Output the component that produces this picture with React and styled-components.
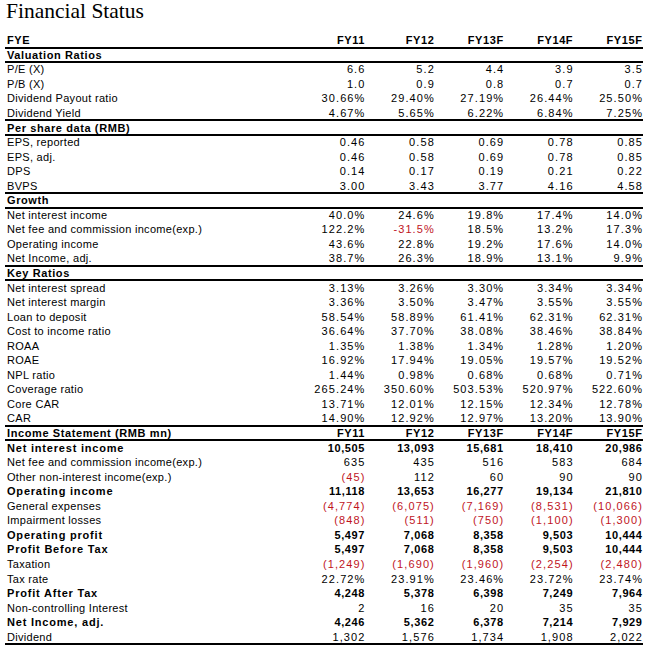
import React from 'react';
import styled, { createGlobalStyle } from 'styled-components';

const GlobalStyle = createGlobalStyle`
  body {
    margin: 0;
    background: #FFFFFF;
  }
`;

const Page = styled.div`
  width: 645px;
  height: 647px;
  padding: 0 2px 0 5px;
  box-sizing: border-box;
  background: #FFFFFF;
  color: #000000;
`;

const Title = styled.h1`
  margin: 0 0 0 1px;
  font-family: 'Liberation Serif', 'Times New Roman', serif;
  font-size: 21.5px;
  font-weight: normal;
  line-height: 22px;
  height: 33px;
`;

const Sheet = styled.div`
  display: flex;
  flex-direction: column;
  font-family: 'Liberation Sans', Arial, sans-serif;
  font-size: 11px;
`;

// fixed pitch rows; the rule straddles the row boundary like a spreadsheet cell border
const Row = styled.div`
  display: grid;
  grid-template-columns: 291px repeat(5, 69.4px);
  align-items: center;
  height: 14.56px;
  line-height: 14px;
  font-weight: ${(p) => (p.$bold ? 'bold' : 'normal')};
  box-shadow: ${(p) => (p.$rule ? 'inset 0 -1px 0 #000, 0 1px 0 #000' : 'none')};
`;

const labelSpacing = { head: '0.6px', strong: '0.8px', plain: '0.3px' };

const Label = styled.div`
  padding-left: 2px;
  white-space: nowrap;
  letter-spacing: ${(p) => labelSpacing[p.$kind]};
`;

const Value = styled.div`
  text-align: right;
  white-space: nowrap;
  letter-spacing: ${(p) => (p.$bold ? '0.6px' : '1.1px')};
  margin-right: ${(p) => (p.$bold ? '0.4px' : '-0.1px')};
  color: ${(p) => (p.$neg ? '#C0141E' : '#000000')};
`;

const YEARS = ['FY11', 'FY12', 'FY13F', 'FY14F', 'FY15F'];

const sections = [
  {
    title: 'Valuation Ratios',
    rows: [
      ['P/E (X)', '6.6', '5.2', '4.4', '3.9', '3.5'],
      ['P/B (X)', '1.0', '0.9', '0.8', '0.7', '0.7'],
      ['Dividend Payout ratio', '30.66%', '29.40%', '27.19%', '26.44%', '25.50%'],
      ['Dividend Yield', '4.67%', '5.65%', '6.22%', '6.84%', '7.25%'],
    ],
  },
  {
    title: 'Per share data (RMB)',
    rows: [
      ['EPS, reported', '0.46', '0.58', '0.69', '0.78', '0.85'],
      ['EPS, adj.', '0.46', '0.58', '0.69', '0.78', '0.85'],
      ['DPS', '0.14', '0.17', '0.19', '0.21', '0.22'],
      ['BVPS', '3.00', '3.43', '3.77', '4.16', '4.58'],
    ],
  },
  {
    title: 'Growth',
    rows: [
      ['Net interest income', '40.0%', '24.6%', '19.8%', '17.4%', '14.0%'],
      ['Net fee and commission income(exp.)', '122.2%', '-31.5%', '18.5%', '13.2%', '17.3%'],
      ['Operating income', '43.6%', '22.8%', '19.2%', '17.6%', '14.0%'],
      ['Net Income, adj.', '38.7%', '26.3%', '18.9%', '13.1%', '9.9%'],
    ],
  },
  {
    title: 'Key Ratios',
    rows: [
      ['Net interest spread', '3.13%', '3.26%', '3.30%', '3.34%', '3.34%'],
      ['Net interest margin', '3.36%', '3.50%', '3.47%', '3.55%', '3.55%'],
      ['Loan to deposit', '58.54%', '58.89%', '61.41%', '62.31%', '62.31%'],
      ['Cost to income ratio', '36.64%', '37.70%', '38.08%', '38.46%', '38.84%'],
      ['ROAA', '1.35%', '1.38%', '1.34%', '1.28%', '1.20%'],
      ['ROAE', '16.92%', '17.94%', '19.05%', '19.57%', '19.52%'],
      ['NPL ratio', '1.44%', '0.98%', '0.68%', '0.68%', '0.71%'],
      ['Coverage ratio', '265.24%', '350.60%', '503.53%', '520.97%', '522.60%'],
      ['Core CAR', '13.71%', '12.01%', '12.15%', '12.34%', '12.78%'],
      ['CAR', '14.90%', '12.92%', '12.97%', '13.20%', '13.90%'],
    ],
  },
  {
    title: 'Income Statement (RMB mn)',
    years: true,
    rows: [
      ['Net interest income', '10,505', '13,093', '15,681', '18,410', '20,986', true],
      ['Net fee and commission income(exp.)', '635', '435', '516', '583', '684'],
      ['Other non-interest income(exp.)', '(45)', '112', '60', '90', '90'],
      ['Operating income', '11,118', '13,653', '16,277', '19,134', '21,810', true],
      ['General expenses', '(4,774)', '(6,075)', '(7,169)', '(8,531)', '(10,066)'],
      ['Impairment losses', '(848)', '(511)', '(750)', '(1,100)', '(1,300)'],
      ['Operating profit', '5,497', '7,068', '8,358', '9,503', '10,444', true],
      ['Profit Before Tax', '5,497', '7,068', '8,358', '9,503', '10,444', true],
      ['Taxation', '(1,249)', '(1,690)', '(1,960)', '(2,254)', '(2,480)'],
      ['Tax rate', '22.72%', '23.91%', '23.46%', '23.72%', '23.74%'],
      ['Profit After Tax', '4,248', '5,378', '6,398', '7,249', '7,964', true],
      ['Non-controlling Interest', '2', '16', '20', '35', '35'],
      ['Net Income, adj.', '4,246', '5,362', '6,378', '7,214', '7,929', true],
      ['Dividend', '1,302', '1,576', '1,734', '1,908', '2,022'],
    ],
  },
];

const isNeg = (v) => v.startsWith('(') || v.startsWith('-');

const DataRow = ({ cells, kind = 'plain', rule }) => {
  const bold = kind !== 'plain';
  return (
    <Row $bold={bold} $rule={rule}>
      <Label $kind={kind}>{cells[0]}</Label>
      {cells.slice(1).map((v, i) => (
        <Value key={i} $bold={bold} $neg={isNeg(v)}>{v}</Value>
      ))}
    </Row>
  );
};

const App = () => (
  <Page>
    <GlobalStyle />
    <Title>Financial Status</Title>
    <Sheet>
      <DataRow cells={['FYE', ...YEARS]} kind="head" rule />
      {sections.map((s) => (
        <React.Fragment key={s.title}>
          <DataRow
            cells={[s.title, ...(s.years ? YEARS : ['', '', '', '', ''])]}
            kind="head"
            rule
          />
          {s.rows.map((r, ri) => (
            <DataRow
              key={r[0] + ri}
              cells={r.slice(0, 6)}
              kind={r[6] ? 'strong' : 'plain'}
              rule={ri === s.rows.length - 1}
            />
          ))}
        </React.Fragment>
      ))}
    </Sheet>
  </Page>
);

export default App;
